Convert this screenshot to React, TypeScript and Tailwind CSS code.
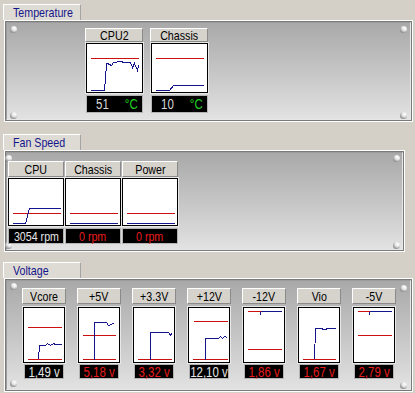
import React from 'react'

type Seg = { d: string; c: 'r' | 'b' }

const RED = '#cc1010'
const BLUE = '#14148c'

const font = "font-['Liberation_Sans',Arial,sans-serif]"

// narrow text: the original uses a condensed face, so squeeze Liberation Sans
function Nx({ children, origin = 'origin-center' }: { children: React.ReactNode; origin?: string }) {
  return <span className={`inline-block whitespace-nowrap scale-x-[0.82] ${origin}`}>{children}</span>
}

function Chart({ w, h, segs }: { w: number; h: number; segs: Seg[] }) {
  return (
    <div className="border border-black bg-white ring-1 ring-[#e8e8e8]" style={{ width: w, height: h }}>
      <svg width={w - 2} height={h - 2} viewBox={`0 0 ${w - 2} ${h - 2}`} className="block">
        {segs.map((s, i) => (
          <polyline
            key={i}
            points={s.d}
            fill="none"
            stroke={s.c === 'r' ? RED : BLUE}
            strokeWidth={1}
            shapeRendering="crispEdges"
            transform="translate(0.5 0.5)"
          />
        ))}
      </svg>
    </div>
  )
}

function Label({ text, w, h }: { text: string; w: number; h: number }) {
  return (
    <div
      className="flex items-center justify-center bg-[#d6d3cc] border border-t-white border-l-white border-r-[#8a8a8a] border-b-[#8a8a8a] text-[13px] leading-none text-black"
      style={{ width: w, height: h }}
    >
      <Nx>{text}</Nx>
    </div>
  )
}

function Screw({ pos }: { pos: string }) {
  return (
    <div
      className={`absolute w-[7px] h-[7px] rounded-full bg-[radial-gradient(circle_at_65%_30%,#ffffff_0%,#e6e6e6_35%,#8c8c8c_75%,#5a5a5a_100%)] ${pos}`}
    />
  )
}

function Panel({
  w,
  h,
  pad,
  screws,
  children,
}: {
  w: number
  h: number
  pad: string
  screws: string[]
  children: React.ReactNode
}) {
  return (
    <div className="relative ml-[4px] border border-white" style={{ width: w, height: h }}>
      <div className="h-full border border-[#7a7a7a]">
        <div
          className={`relative h-full border border-t-[#9c9c9c] border-l-[#9c9c9c] border-r-[#e6e6e6] border-b-[#e6e6e6] bg-linear-to-b from-[#a9a9a9] to-[#e2e2e2] ${pad}`}
        >
          {screws.map((s, i) => (
            <Screw key={i} pos={s} />
          ))}
          <div className="relative flex">{children}</div>
        </div>
      </div>
    </div>
  )
}

function Tab({ text }: { text: string }) {
  return (
    <div className="ml-[3px] w-[78px] h-[16px] flex items-center pl-[9px] bg-[#dedbd4] border border-b-0 border-t-white border-l-white border-r-[#a4a4a4] text-[13px] leading-none text-[#14148a]">
      <Nx origin="origin-left">{text}</Nx>
    </div>
  )
}

const temps = [
  {
    label: 'CPU2',
    value: '51',
    segs: [
      { c: 'r', d: '3,14 51,14' },
      { c: 'b', d: '3,46 17,46 18,34 19,19 20,19 24,21 26,18 34,17 36,18 43,18 45,23 47,19 50,26 51,21' },
    ] as Seg[],
  },
  {
    label: 'Chassis',
    value: '10',
    segs: [
      { c: 'r', d: '3,14 51,14' },
      { c: 'b', d: '3,46 17,46 21,41 51,41' },
    ] as Seg[],
  },
]

const fans = [
  {
    label: 'CPU',
    value: '3054 rpm',
    alarm: false,
    segs: [
      { c: 'r', d: '3,34 51,34' },
      { c: 'b', d: '3,44 16,44 20,29 51,29' },
    ] as Seg[],
  },
  {
    label: 'Chassis',
    value: '0 rpm',
    alarm: true,
    segs: [
      { c: 'r', d: '3,34 51,34' },
      { c: 'b', d: '3,44 51,44' },
    ] as Seg[],
  },
  {
    label: 'Power',
    value: '0 rpm',
    alarm: true,
    segs: [
      { c: 'r', d: '3,34 51,34' },
      { c: 'b', d: '3,44 51,44' },
    ] as Seg[],
  },
]

const volts = [
  {
    label: 'Vcore',
    value: '1,49 v',
    alarm: false,
    segs: [
      { c: 'r', d: '3,19 37,19' },
      { c: 'r', d: '3,51 37,51' },
      { c: 'b', d: '14,51 15,37 21,37 23,35 26,37 29,35 31,36 37,36' },
    ] as Seg[],
  },
  {
    label: '+5V',
    value: '5,18 v',
    alarm: true,
    segs: [
      { c: 'r', d: '3,27 36,27' },
      { c: 'r', d: '3,51 36,51' },
      { c: 'b', d: '15,51 15,14 27,14 29,17 32,16 35,14' },
    ] as Seg[],
  },
  {
    label: '+3.3V',
    value: '3,32 v',
    alarm: true,
    segs: [
      { c: 'r', d: '3,51 37,51' },
      { c: 'b', d: '16,51 16,24 34,24 36,27 37,25' },
    ] as Seg[],
  },
  {
    label: '+12V',
    value: '12,10 v',
    alarm: false,
    segs: [
      { c: 'r', d: '4,13 38,13' },
      { c: 'r', d: '3,51 38,51' },
      { c: 'b', d: '16,51 16,30 29,30 31,28 33,30 35,28 38,29' },
    ] as Seg[],
  },
  {
    label: '-12V',
    value: '1,86 v',
    alarm: true,
    segs: [
      { c: 'r', d: '3,3 16,3' },
      { c: 'b', d: '16,3 37,3' },
      { c: 'b', d: '16,3 16,6' },
      { c: 'r', d: '3,41 37,41' },
    ] as Seg[],
  },
  {
    label: 'Vio',
    value: '1,67 v',
    alarm: true,
    segs: [
      { c: 'r', d: '3,51 36,51' },
      { c: 'b', d: '15,51 16,20 21,20 25,21 29,20 36,20' },
    ] as Seg[],
  },
  {
    label: '-5V',
    value: '2,79 v',
    alarm: true,
    segs: [
      { c: 'r', d: '3,3 15,3' },
      { c: 'b', d: '15,3 37,3' },
      { c: 'b', d: '15,3 15,6' },
      { c: 'r', d: '3,27 37,27' },
    ] as Seg[],
  },
]

export default function App() {
  return (
    <div className={`w-[415px] h-[393px] bg-[#d4d0c8] pt-[4px] overflow-hidden ${font}`}>
      {/* Temperature */}
      <Tab text="Temperature" />
      <Panel
        w={409}
        h={102}
        pad="pl-[78px] pt-[5px]"
        screws={['left-[3px] top-[3px]', 'left-[3px] bottom-[0px]', 'right-[3px] top-[3px]', 'right-[3px] bottom-[0px]']}
      >
        <div className="flex gap-[7px]">
          {temps.map((t) => (
            <div key={t.label} className="flex flex-col">
              <Label text={t.label} w={58} h={14} />
              <div className="ml-[1px] mt-[1px]">
                <Chart w={57} h={50} segs={t.segs} />
              </div>
              <div className="ml-[1px] mt-[2px] w-[57px] h-[18px] bg-black border border-[#b4b4b4] flex items-center justify-between pl-[9px] pr-[4px] text-[14px] leading-none">
                <span className="text-[#d8d8d8]"><Nx origin="origin-left">{t.value}</Nx></span>
                <span className="text-[#1ed21e]"><Nx origin="origin-right">°C</Nx></span>
              </div>
            </div>
          ))}
        </div>
      </Panel>

      {/* Fan Speed */}
      <div className="mt-[12px]">
        <Tab text="Fan Speed" />
        <Panel
          w={401}
          h={102}
          pad="pl-[1px] pt-[8px]"
          screws={['left-[-2px] top-[2px]', 'left-[-2px] bottom-[0px]', 'right-[2px] top-[2px]', 'right-[2px] bottom-[0px]']}
        >
          <div className="flex gap-[1px]">
            {fans.map((f) => (
              <div key={f.label} className="flex flex-col">
                <Label text={f.label} w={56} h={16} />
                <div className="mt-[1px]">
                  <Chart w={56} h={48} segs={f.segs} />
                </div>
                <div
                  className={`mt-[2px] w-[56px] h-[16px] bg-black border border-[#b4b4b4] flex items-center justify-center text-[13px] leading-none ${
                    f.alarm ? 'text-[#e81c1c]' : 'text-[#e6e6e6]'
                  }`}
                >
                  <Nx>{f.value}</Nx>
                </div>
              </div>
            ))}
          </div>
        </Panel>
      </div>

      {/* Voltage */}
      <div className="mt-[10px]">
        <Tab text="Voltage" />
        <Panel
          w={409}
          h={114}
          pad="pl-[15px] pt-[7px]"
          screws={['left-[3px] top-[2px]', 'left-[3px] bottom-[2px]', 'right-[3px] top-[4px]', 'right-[3px] bottom-[0px]']}
        >
          <div className="flex gap-[11px]">
            {volts.map((v) => (
              <div key={v.label} className="flex flex-col">
                <Label text={v.label} w={44} h={16} />
                <div className="ml-[1px] mt-[3px]">
                  <Chart w={42} h={56} segs={v.segs} />
                </div>
                <div
                  className={`ml-[2px] mt-[1px] w-[40px] h-[15px] bg-black border border-[#b4b4b4] flex items-center justify-center text-[14px] leading-none ${
                    v.alarm ? 'text-[#e81c1c]' : 'text-[#e6e6e6]'
                  }`}
                >
                  <Nx>{v.value}</Nx>
                </div>
              </div>
            ))}
          </div>
        </Panel>
      </div>
    </div>
  )
}
